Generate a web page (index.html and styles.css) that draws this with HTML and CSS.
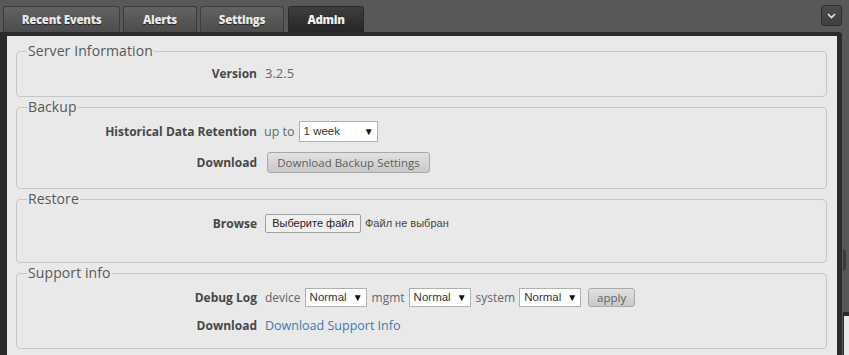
FILE: index.html
```html
<!DOCTYPE html>
<html lang="en">
<head>
<meta charset="utf-8">
<title>Admin</title>
<link rel="stylesheet" href="styles.css">
</head>
<body>
<div class="app">
  <div class="topbar">
    <nav class="tabs">
      <a class="tab tab-events">Recent Events</a>
      <a class="tab tab-alerts">Alerts</a>
      <a class="tab tab-settings">Settings</a>
      <a class="tab tab-admin active">Admin</a>
    </nav>
    <button class="menu-btn" type="button" aria-label="Menu">
      <svg width="9" height="6" viewBox="0 0 9 6"><path d="M1 1 L4.5 4.5 L8 1" fill="none" stroke="#e6e6e6" stroke-width="1.6"/></svg>
    </button>
  </div>
  <div class="panel">
    <fieldset class="group group-server">
      <legend>Server Information</legend>
      <div class="rows">
        <div class="label">Version</div>
        <div class="value"><span class="text">3.2.5</span></div>
      </div>
    </fieldset>
    <fieldset class="group group-backup">
      <legend>Backup</legend>
      <div class="rows rows-backup">
        <div class="label">Historical Data Retention</div>
        <div class="value"><span class="text text-upto">up to</span><span class="select select-week"><span>1 week</span><span class="arrow">▼</span></span></div>
        <div class="label">Download</div>
        <div class="value"><button class="btn btn-backup" type="button">Download Backup Settings</button></div>
      </div>
    </fieldset>
    <fieldset class="group group-restore">
      <legend>Restore</legend>
      <div class="rows">
        <div class="label">Browse</div>
        <div class="value"><button class="file-btn" type="button">Выберите файл</button><span class="file-name">Файл не выбран</span></div>
      </div>
    </fieldset>
    <fieldset class="group group-support">
      <legend>Support info</legend>
      <div class="rows rows-support">
        <div class="label">Debug Log</div>
        <div class="value">
          <span class="text text-sm">device</span><span class="select select-level"><span>Normal</span><span class="arrow">▼</span></span>
          <span class="text text-sm">mgmt</span><span class="select select-level"><span>Normal</span><span class="arrow">▼</span></span>
          <span class="text text-sm">system</span><span class="select select-level"><span>Normal</span><span class="arrow">▼</span></span>
          <button class="btn btn-apply" type="button">apply</button>
        </div>
        <div class="label">Download</div>
        <div class="value"><a class="link">Download Support Info</a></div>
      </div>
    </fieldset>
  </div>
  <div class="side-scroll"></div>
  <div class="side-panel"></div>
</div>
</body>
</html>
```
FILE: styles.css
```css
* { box-sizing: border-box; }

html, body {
  margin: 0;
  padding: 0;
  height: 355px;
  overflow: hidden;
}

body {
  background: #585858;
  font-family: "Open Sans", "Noto Sans", sans-serif;
  color: #4a4a4a;
}

.app {
  width: 842px;
  height: 355px;
  display: flex;
  flex-direction: column;
  position: relative;
}

.topbar {
  height: 32px;
  display: flex;
  align-items: flex-end;
  justify-content: space-between;
  padding-left: 3px;
}

.tabs {
  display: flex;
  gap: 3px;
}

.tab {
  height: 26px;
  display: flex;
  align-items: center;
  justify-content: center;
  border: 1px solid #3c3c3c;
  border-bottom: none;
  border-radius: 3px 3px 0 0;
  background: linear-gradient(#626262, #4c4c4c);
  color: #e8e8e8;
  font-size: 11.5px;
  font-weight: 800;
  letter-spacing: -0.3px;
  text-shadow: 0 1px 1px #222;
  padding-bottom: 1px;
}

.tab-events { width: 117px; }
.tab-alerts { width: 74px; }
.tab-settings { width: 84px; margin-right: 1px; }
.tab-admin { width: 76px; }

.tab.active {
  background: linear-gradient(#3e3e3e, #262626);
  border-color: #2a2a2a;
  color: #f2f2f2;
}

.menu-btn {
  align-self: flex-start;
  margin-top: 5px;
  width: 21px;
  height: 21px;
  padding: 0;
  border: 1px solid #2e2e2e;
  border-radius: 3px;
  background: linear-gradient(#4c4c4c, #3e3e3e);
  display: flex;
  align-items: center;
  justify-content: center;
}

.panel {
  flex: 1;
  background: #e9e9e9;
  border-style: solid;
  border-color: #2b2b2b;
  border-width: 4px 5px 0 7px;
  border-radius: 0 4px 0 0;
  padding: 5px 10px 0 9px;
}

.group {
  margin: 0;
  padding: 0;
  border: 1px solid #c6c6c6;
  border-radius: 4px;
  min-width: 0;
}

.group legend {
  margin-left: 10px;
  padding: 0 1px;
  font-size: 14px;
  line-height: 20px;
  letter-spacing: 0.1px;
  color: #585858;
}

.rows {
  display: grid;
  grid-template-columns: 240px auto;
  column-gap: 8px;
  grid-auto-rows: 24px;
  align-items: center;
}

.group-server .rows { padding: 0 0 11px; }
.group-backup .rows { padding: 2px 0 14px; row-gap: 7px; }
.group-restore .rows { padding: 2px 0 27px; }
.group-support .rows { padding: 2px 0 11px; row-gap: 4px; }

.label {
  text-align: right;
  font-weight: 700;
  font-size: 12px;
  color: #474747;
}

.value {
  display: flex;
  align-items: center;
}

.text {
  font-size: 13px;
  color: #666;
  margin-right: 4px;
}

.text-upto {
  margin-left: -1px;
  margin-right: 4px;
  font-size: 12.5px;
}

.text-sm {
  font-size: 12px;
  margin-right: 4px;
}

.select {
  display: inline-flex;
  align-items: center;
  justify-content: space-between;
  background: #fff;
  border: 1px solid #b0b0b0;
  font-family: "Liberation Sans", Arial, sans-serif;
  font-size: 11.5px;
  color: #333;
  padding: 0 3px 0 4px;
}

.select .arrow {
  font-size: 10px;
  color: #111;
}

.select-week {
  width: 79px;
  height: 21px;
}

.select-level {
  width: 62px;
  height: 19px;
  margin-right: 5px;
}

.btn {
  font-family: "Open Sans", "Noto Sans", sans-serif;
  font-size: 11.5px;
  color: #606060;
  border: 1px solid #a8a8a8;
  border-radius: 3px;
  background: linear-gradient(#e2e2e2, #c8c8c8);
  padding: 0;
}

.btn-backup {
  width: 163px;
  height: 21px;
  margin-left: 2px;
}

.btn-apply {
  width: 47px;
  height: 19px;
  margin-left: 2px;
}

.file-btn {
  height: 19px;
  width: 96px;
  padding: 0;
  font-family: "Liberation Sans", Arial, sans-serif;
  font-size: 11px;
  color: #222;
  background: #f0f0f0;
  border: 1px solid #a0a0a0;
  border-radius: 2px;
}

.file-name {
  margin-left: 4px;
  font-family: "Liberation Sans", Arial, sans-serif;
  font-size: 11px;
  color: #444;
}

.link {
  font-size: 12.5px;
  color: #3c7ab4;
}

.side-scroll {
  position: absolute;
  left: 843px;
  top: 250px;
  width: 3px;
  height: 20px;
  background: #3a3a3a;
}

.side-panel {
  position: absolute;
  left: 843px;
  top: 312px;
  width: 6px;
  height: 43px;
  background: #e9e9e9;
  border-top: 4px solid #2b2b2b;
  border-left: 1px solid #2b2b2b;
}
```
